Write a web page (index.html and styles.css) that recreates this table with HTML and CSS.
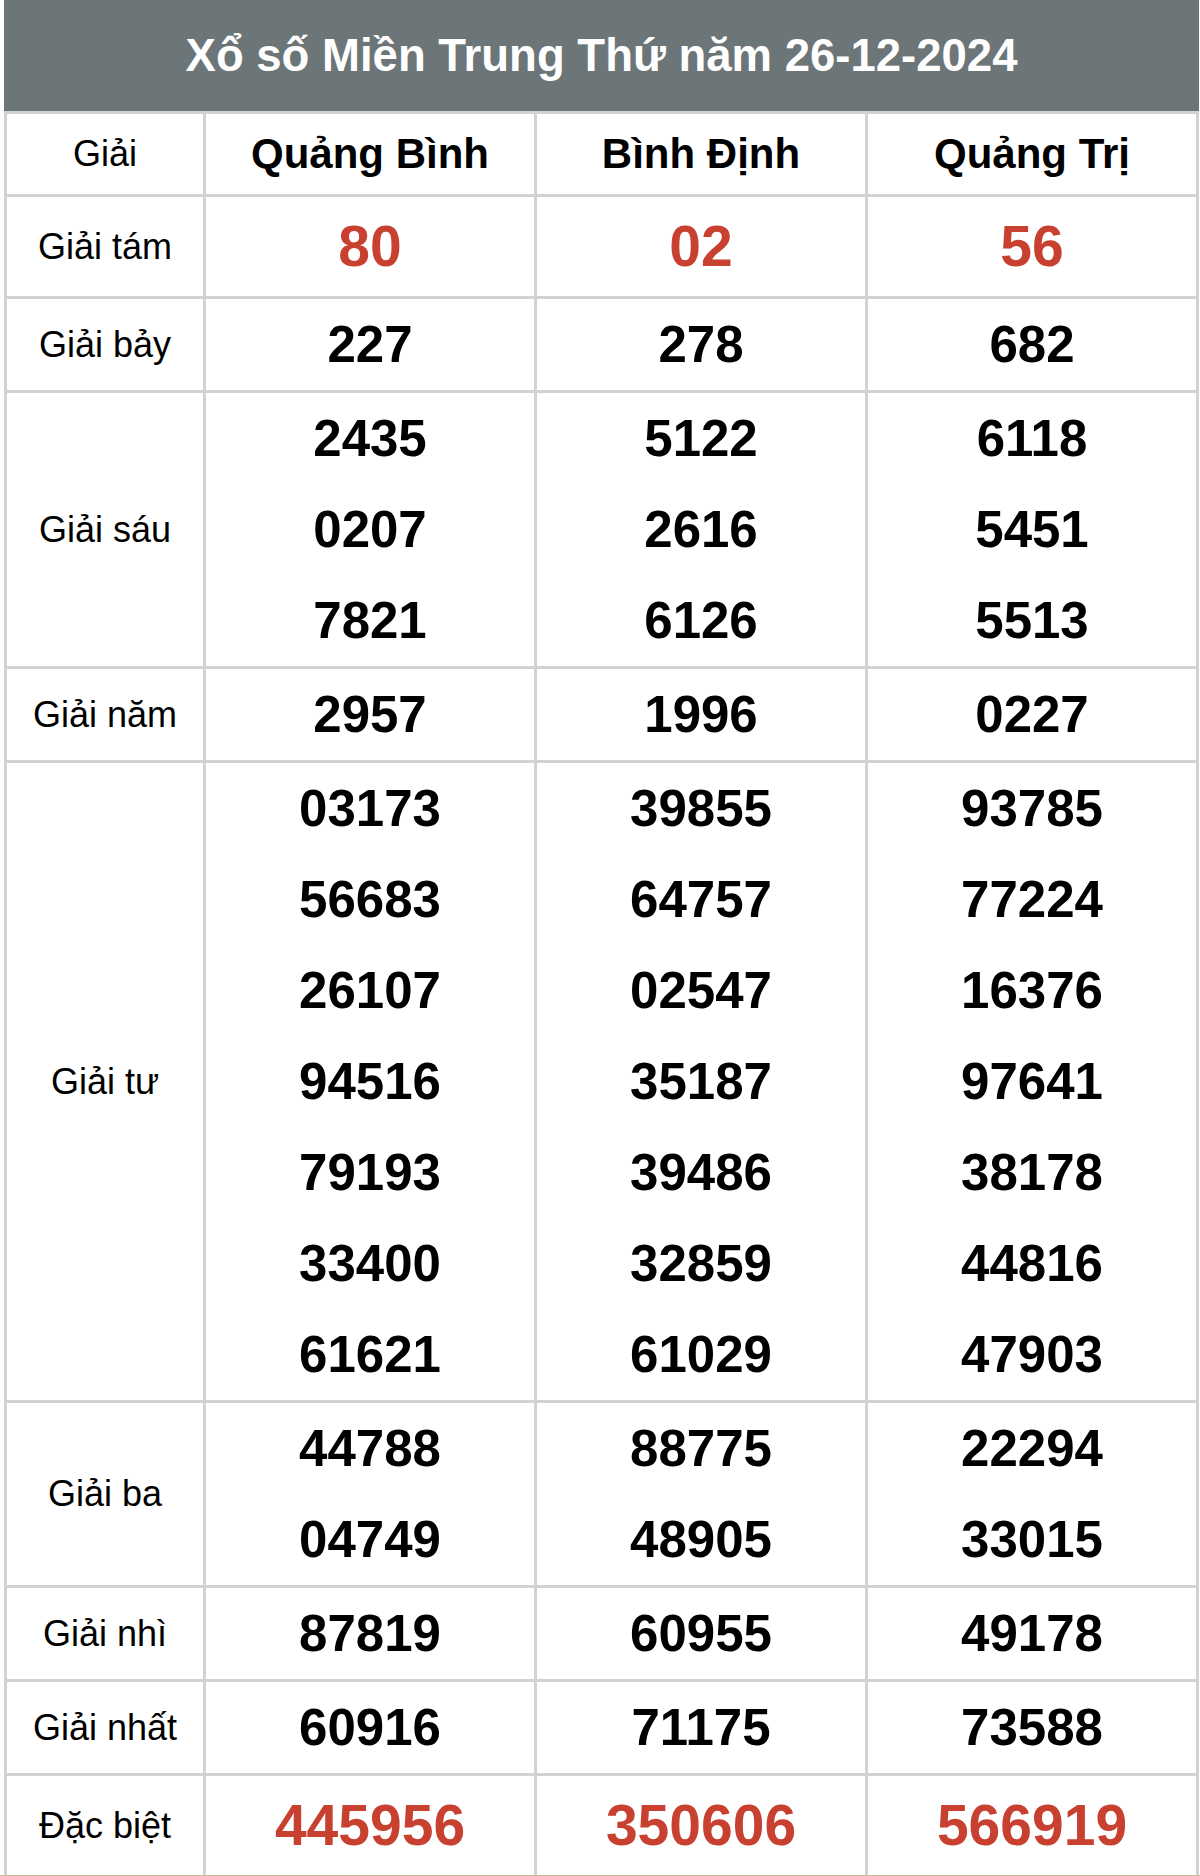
FILE: index.html
```html
<!DOCTYPE html>
<html lang="vi">
<head>
<meta charset="utf-8">
<title>Xổ số Miền Trung</title>
<link rel="stylesheet" href="styles.css">
</head>
<body>
<div class="page">
<table class="kq">
<colgroup><col class="c-label"><col class="c-prov"><col class="c-prov"><col class="c-prov"></colgroup>
<thead>
<tr><th class="title" colspan="4">Xổ số Miền Trung Thứ năm 26-12-2024</th></tr>
<tr class="r-head"><td class="label">Giải</td><th class="prov">Quảng Bình</th><th class="prov">Bình Định</th><th class="prov">Quảng Trị</th></tr>
</thead>
<tbody>
<tr class="r-8"><td class="label">Giải tám</td><td class="num red big">80</td><td class="num red big">02</td><td class="num red big">56</td></tr>
<tr class="r-7"><td class="label">Giải bảy</td><td class="num">227</td><td class="num">278</td><td class="num">682</td></tr>
<tr class="r-6"><td class="label">Giải sáu</td>
<td class="num"><div>2435</div><div>0207</div><div>7821</div></td>
<td class="num"><div>5122</div><div>2616</div><div>6126</div></td>
<td class="num"><div>6118</div><div>5451</div><div>5513</div></td></tr>
<tr class="r-5"><td class="label">Giải năm</td><td class="num">2957</td><td class="num">1996</td><td class="num">0227</td></tr>
<tr class="r-4"><td class="label">Giải tư</td>
<td class="num"><div>03173</div><div>56683</div><div>26107</div><div>94516</div><div>79193</div><div>33400</div><div>61621</div></td>
<td class="num"><div>39855</div><div>64757</div><div>02547</div><div>35187</div><div>39486</div><div>32859</div><div>61029</div></td>
<td class="num"><div>93785</div><div>77224</div><div>16376</div><div>97641</div><div>38178</div><div>44816</div><div>47903</div></td></tr>
<tr class="r-3"><td class="label">Giải ba</td>
<td class="num"><div>44788</div><div>04749</div></td>
<td class="num"><div>88775</div><div>48905</div></td>
<td class="num"><div>22294</div><div>33015</div></td></tr>
<tr class="r-2"><td class="label">Giải nhì</td><td class="num">87819</td><td class="num">60955</td><td class="num">49178</td></tr>
<tr class="r-1"><td class="label">Giải nhất</td><td class="num">60916</td><td class="num">71175</td><td class="num">73588</td></tr>
<tr class="r-db"><td class="label">Đặc biệt</td><td class="num red big">445956</td><td class="num red big">350606</td><td class="num red big">566919</td></tr>
</tbody>
</table>
</div>
</body>
</html>
```
FILE: styles.css
```css
html, body {
  margin: 0;
  padding: 0;
  background: #ffffff;
}
.page {
  padding: 0 4px 0 4px;
  border-bottom: 4px solid #c9b99d;
  font-family: "Liberation Sans", Arial, Helvetica, sans-serif;
  color: #000;
}
.kq {
  width: 1192px;
  border-collapse: collapse;
  table-layout: fixed;
}
.c-label { width: 199px; }
.c-prov { width: 331px; }
.kq td, .kq th {
  border: 3px solid #d2d2d2;
  padding: 0;
  text-align: center;
  vertical-align: middle;
}
.kq th.title {
  background: #6c7577;
  color: #ffffff;
  font-size: 45.5px;
  font-weight: 700;
  height: 111px;
  border-top: 0;
  border-left-color: #6c7577;
  border-right-color: #6c7577;
}
.label {
  font-size: 36px;
  font-weight: 400;
  color: #000;
}
.prov {
  font-size: 42px;
  font-weight: 700;
  color: #000;
}
.num {
  font-size: 51px;
  font-weight: 700;
  color: #000;
  line-height: 91px;
}
.num div { line-height: 91px; }
.red { color: #c8402f; }
.big { font-size: 57px; }
.r-head td, .r-head th { height: 80px; }
.r-8 td { height: 99px; }
.r-7 td { height: 91px; }
.r-6 td { height: 273px; }
.r-5 td { height: 91px; }
.r-4 td { height: 637px; }
.r-3 td { height: 180px; }
.r-2 td { height: 87px; }
.r-1 td { height: 91px; }
.r-db td { height: 99px; border-bottom: 0; }
```
